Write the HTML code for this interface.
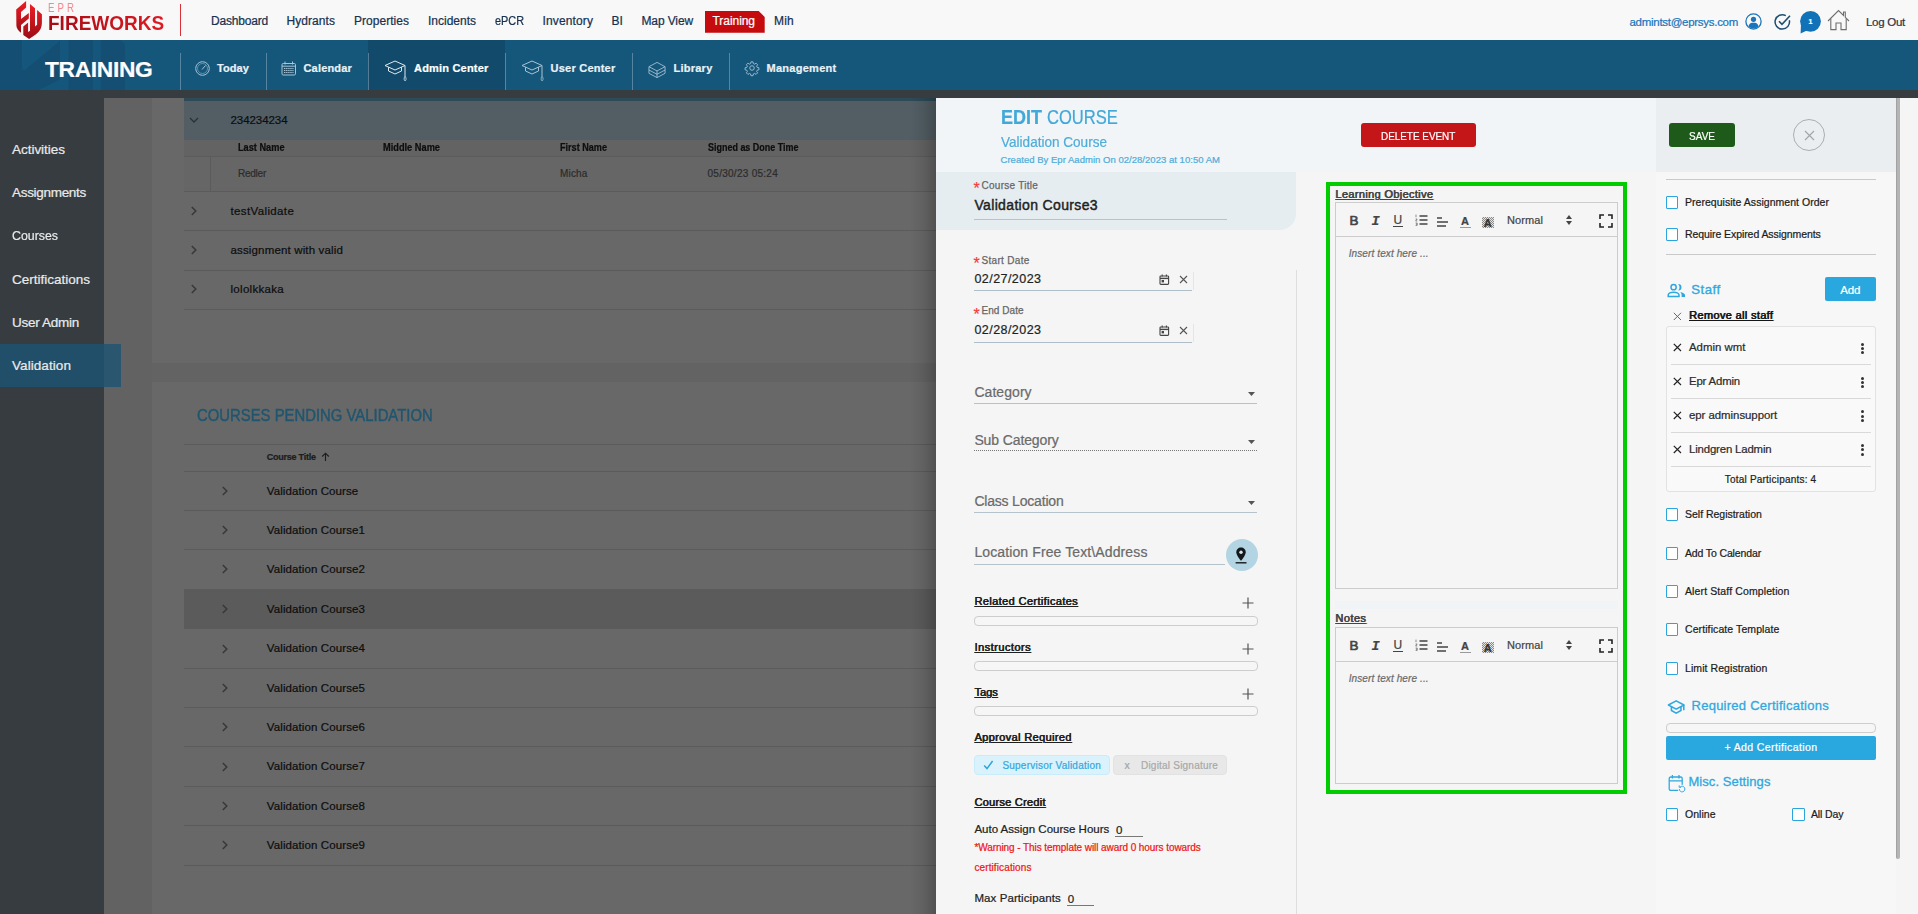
<!DOCTYPE html>
<html lang="en">
<head>
<meta charset="utf-8">
<title>EPR Fireworks - Training</title>
<style>
*{box-sizing:border-box;margin:0;padding:0}
html,body{width:1918px;height:914px;overflow:hidden;background:#636363;font-family:"Liberation Sans",sans-serif;color:#222}
.a{position:absolute}
.t{position:absolute;white-space:nowrap;line-height:1;-webkit-text-stroke-width:.22px}
svg{overflow:visible}
</style>
</head>
<body>
<div class="a" style="left:0px;top:0px;width:1918px;height:40px;background:#f8f8f8;"></div>
<div class="a" style="left:0px;top:40px;width:1918px;height:50px;background:#15567b;"></div>
<div class="a" style="left:0px;top:90px;width:1918px;height:8px;background:#373c40;"></div>
<div class="a" style="left:104px;top:98px;width:48px;height:816px;background:#626262;"></div>
<div class="a" style="left:152px;top:98px;width:790px;height:265px;background:#686868;"></div>
<div class="a" style="left:152px;top:363px;width:790px;height:19px;background:#636363;"></div>
<div class="a" style="left:152px;top:382px;width:790px;height:532px;background:#686868;"></div>
<div class="a" style="left:0px;top:90px;width:104px;height:824px;background:#373c40;"></div>
<div class="a" style="left:0px;top:344px;width:121px;height:43px;background:#2a566f;"></div>
<div class="a" style="left:0px;top:344px;width:104px;height:43px;background:#214e69;"></div>
<svg class="a" style="left:15px;top:0px;" width="28" height="40" viewBox="0 0 28 40"><defs><linearGradient id="lg" x1="0" y1="0" x2="0" y2="1"><stop offset="0" stop-color="#f01c26"/><stop offset="1" stop-color="#9a0e16"/></linearGradient></defs>
<path d="M11.1 .9 L11.1 7.6 L6 11.9 L6 19.1 L13.8 13.1 L13.8 18.4 L6 25 L6 32.8 C3.4 30.6 1.6 28.4 1.4 25.7 L1.2 9.4 Z" fill="url(#lg)"/>
<path d="M15 3.9 L20 8.3 L20 26.4 L22.1 24.8 L22.1 9.9 L26.9 14.2 L26.9 22 C26.9 25 26.4 27 25.8 28.5 C24.6 31 22.6 33 20.7 34.5 L14.1 39 L8.3 34.9 L8.3 26.4 L13.1 22.5 L13.1 31.9 L15 30.8 Z" fill="url(#lg)"/></svg>
<span class="t" style="left:48.3px;top:2.00px;font-size:12.4px;color:#f4878e;letter-spacing:3.9px;transform:scaleX(.78);transform-origin:0 0;-webkit-text-stroke-width:0;">EPR</span>
<span class="t" style="left:47.6px;top:13.00px;font-size:20.2px;font-weight:700;color:#c8141e;transform:scaleX(0.9418);transform-origin:0 0;-webkit-text-stroke:0;background:linear-gradient(to right,#a50d15,#df1a24);-webkit-background-clip:text;background-clip:text;-webkit-text-fill-color:transparent;">FIREWORKS</span>
<div class="a" style="left:180px;top:4px;width:1px;height:32px;background:#d9303a;"></div>
<span class="t" style="left:211.0px;top:15.00px;font-size:12px;color:#17314f;letter-spacing:-0.191px;">Dashboard</span>
<span class="t" style="left:286.5px;top:15.00px;font-size:12px;color:#17314f;letter-spacing:0.059px;">Hydrants</span>
<span class="t" style="left:354.0px;top:15.00px;font-size:12px;color:#17314f;letter-spacing:0.030px;">Properties</span>
<span class="t" style="left:428.0px;top:15.00px;font-size:12px;color:#17314f;">Incidents</span>
<span class="t" style="left:495.0px;top:15.00px;font-size:12px;color:#17314f;transform:scaleX(0.9058);transform-origin:0 0;">ePCR</span>
<span class="t" style="left:542.5px;top:15.00px;font-size:12px;color:#17314f;letter-spacing:0.127px;">Inventory</span>
<span class="t" style="left:611.5px;top:15.00px;font-size:12px;color:#17314f;letter-spacing:0.078px;">BI</span>
<span class="t" style="left:641.5px;top:15.00px;font-size:12px;color:#17314f;letter-spacing:-0.123px;">Map View</span>
<div class="a" style="left:704.7px;top:11px;width:60px;height:21.7px;background:#c50b0e;clip-path:polygon(0 0,54px 0,100% 6px,100% 100%,0 100%)"></div>
<span class="t" style="left:712.5px;top:15.00px;font-size:12px;color:#fff;letter-spacing:-0.053px;">Training</span>
<span class="t" style="left:774.0px;top:15.00px;font-size:12px;color:#17314f;letter-spacing:0.219px;">Mih</span>
<span class="t" style="left:1629.5px;top:17.00px;font-size:11.5px;color:#1a75bc;letter-spacing:-0.286px;">admintst@eprsys.com</span>
<svg class="a" style="left:1745px;top:13px;" width="17" height="17" viewBox="0 0 17 17"><circle cx="8.5" cy="8.5" r="7.6" fill="none" stroke="#1a75bc" stroke-width="1.3"/><circle cx="8.5" cy="6.3" r="2.6" fill="#1a75bc"/><path d="M3.4 13.2 C4.2 10.3 6.3 9.8 8.5 9.8 C10.7 9.8 12.8 10.3 13.6 13.2 C12.2 14.8 10.4 15.6 8.5 15.6 C6.6 15.6 4.8 14.8 3.4 13.2Z" fill="#1a75bc"/></svg>
<svg class="a" style="left:1774px;top:13px;" width="18" height="18" viewBox="0 0 18 18"><path d="M15.3 7.2 A7.2 7.2 0 1 1 11.8 2.6" fill="none" stroke="#1d4f72" stroke-width="1.5"/><path d="M5 8.2 L8 11.4 L16 2.8" fill="none" stroke="#1d4f72" stroke-width="1.6"/></svg>
<svg class="a" style="left:1798px;top:10px;" width="26" height="26" viewBox="0 0 26 26"><circle cx="12.5" cy="11.3" r="10.4" fill="#1272b8"/><path d="M3 14 L2.6 23.6 L10 20Z" fill="#1272b8"/></svg>
<span class="t" style="left:1808.6px;top:18.00px;font-size:7px;font-weight:700;color:#fff;">1</span>
<svg class="a" style="left:1827px;top:9px;" width="23" height="22" viewBox="0 0 23 22"><path d="M1 12 L11.5 1.5 L16.5 6.5 L16.5 3 L18.3 3 L18.3 8.3 L22 12" fill="none" stroke="#6d6e70" stroke-width="1.1"/><path d="M3.8 9.6 L3.8 20.6 L9 20.6 L9 14 L14 14 L14 20.6 L19.2 20.6 L19.2 9.6" fill="none" stroke="#6d6e70" stroke-width="1.1"/></svg>
<span class="t" style="left:1866.0px;top:17.00px;font-size:11.5px;color:#334;letter-spacing:-0.275px;">Log Out</span>
<div class="a" style="left:0px;top:40px;width:125px;height:50px;background:#144e72;border-radius:0 7px 0 0;"></div>
<svg class="a" style="left:0px;top:40px;" width="125" height="50" viewBox="0 0 125 50"><path d="M22 0H59.5V1.2L25 30H22Z M60 0H68.6V50H38.5L60 39.5Z M93 0h7.7v50H93z" fill="#15577c"/></svg>
<div class="a" style="left:368px;top:40px;width:137px;height:50px;background:#124a6c;"></div>
<div class="a" style="left:180px;top:53px;width:1px;height:37px;background:rgba(255,255,255,.28);"></div>
<div class="a" style="left:266px;top:53px;width:1px;height:37px;background:rgba(255,255,255,.28);"></div>
<div class="a" style="left:368px;top:53px;width:1px;height:37px;background:rgba(255,255,255,.28);"></div>
<div class="a" style="left:505px;top:53px;width:1px;height:37px;background:rgba(255,255,255,.28);"></div>
<div class="a" style="left:632px;top:53px;width:1px;height:37px;background:rgba(255,255,255,.28);"></div>
<div class="a" style="left:729px;top:53px;width:1px;height:37px;background:rgba(255,255,255,.28);"></div>
<span class="t" style="left:45.0px;top:58.00px;font-size:22.8px;font-weight:700;color:#fff;letter-spacing:-0.336px;">TRAINING</span>
<span class="t" style="left:217.0px;top:63.00px;font-size:11px;font-weight:700;color:#e9f1f6;letter-spacing:0.084px;">Today</span>
<span class="t" style="left:303.5px;top:63.00px;font-size:11px;font-weight:700;color:#e9f1f6;letter-spacing:0.178px;">Calendar</span>
<span class="t" style="left:414.0px;top:63.00px;font-size:11px;font-weight:700;color:#fff;letter-spacing:0.198px;">Admin Center</span>
<span class="t" style="left:550.5px;top:63.00px;font-size:11px;font-weight:700;color:#e9f1f6;letter-spacing:0.240px;">User Center</span>
<span class="t" style="left:673.5px;top:63.00px;font-size:11px;font-weight:700;color:#e9f1f6;letter-spacing:0.243px;">Library</span>
<span class="t" style="left:766.5px;top:63.00px;font-size:11px;font-weight:700;color:#e9f1f6;letter-spacing:0.275px;">Management</span>
<svg class="a" style="left:195px;top:61px;" width="15" height="15" viewBox="0 0 15 15"><circle cx="7.5" cy="7.5" r="6.8" fill="none" stroke="#a9c4d4" stroke-width="1"/><circle cx="7.5" cy="7.5" r="5" fill="none" stroke="#a9c4d4" stroke-width=".5"/><path d="M7 8.5 L10.5 4.5" stroke="#a9c4d4" stroke-width="1"/></svg>
<svg class="a" style="left:281px;top:61px;" width="16" height="15" viewBox="0 0 16 15"><rect x="1" y="2.5" width="13.5" height="11.5" rx="1.2" fill="none" stroke="#a9c4d4" stroke-width="1"/><path d="M4 .5v3M11.5 .5v3M1 5.2h13.5" stroke="#a9c4d4" stroke-width="1"/><path d="M3 7.5h9.5M3 9.5h9.5M3 11.5h9.5" stroke="#a9c4d4" stroke-width="1.2" stroke-dasharray="1.4 .7"/></svg>
<svg class="a" style="left:384px;top:59.5px;" width="24" height="22" viewBox="0 0 24 22"><path d="M1 5.5 L11 1 L21 5.5 L11 10 Z M4.5 7.2 L4.5 11 L11 14 L17.5 11 L17.5 7.2" fill="none" stroke="#dfe9ef" stroke-width="1"/><path d="M21 5.5 V17" stroke="#dfe9ef" stroke-width="1"/><rect x="20.2" y="17" width="1.8" height="3.6" rx=".9" fill="none" stroke="#dfe9ef" stroke-width=".8"/></svg>
<svg class="a" style="left:521px;top:59.5px;" width="24" height="22" viewBox="0 0 24 22"><path d="M1 5.5 L11 1 L21 5.5 L11 10 Z M4.5 7.2 L4.5 11 L11 14 L17.5 11 L17.5 7.2" fill="none" stroke="#a9c4d4" stroke-width="1"/><path d="M21 5.5 V17" stroke="#a9c4d4" stroke-width="1"/><rect x="20.2" y="17" width="1.8" height="3.6" rx=".9" fill="none" stroke="#a9c4d4" stroke-width=".8"/></svg>
<svg class="a" style="left:647.6px;top:60.6px;" width="18" height="18" viewBox="0 0 19 19"><path d="M1 6 L9.5 1.5 L18 6 L9.5 10.5Z M1 6 V13 L9.5 17.5 L18 13 V6 M9.5 10.5 V17.5 M1 9.5 L9.5 14 L18 9.5" fill="none" stroke="#a9c4d4" stroke-width=".9"/></svg>
<svg class="a" style="left:745px;top:61px;" width="14" height="14" viewBox="0 0 16 16"><circle cx="8" cy="8" r="2.6" fill="none" stroke="#a9c4d4" stroke-width="1"/><path d="M6.8 1 h2.4 l.4 2 l1.4 .6 l1.7-1.1 l1.7 1.7 l-1.1 1.7 l.6 1.4 l2 .4 v2.4 l-2 .4 l-.6 1.4 l1.1 1.7 l-1.7 1.7 l-1.7-1.1 l-1.4 .6 l-.4 2 h-2.4 l-.4-2 l-1.4-.6 l-1.7 1.1 l-1.7-1.7 l1.1-1.7 l-.6-1.4 l-2-.4 v-2.4 l2-.4 l.6-1.4 l-1.1-1.7 l1.7-1.7 l1.7 1.1 l1.4-.6 z" fill="none" stroke="#a9c4d4" stroke-width="1"/></svg>
<span class="t" style="left:12.0px;top:143.00px;font-size:13.5px;color:#e9eaea;letter-spacing:-0.027px;">Activities</span>
<span class="t" style="left:12.0px;top:186.00px;font-size:13.5px;color:#e9eaea;letter-spacing:-0.300px;">Assignments</span>
<span class="t" style="left:12.0px;top:229.00px;font-size:13.5px;color:#e9eaea;transform:scaleX(0.9149);transform-origin:0 0;">Courses</span>
<span class="t" style="left:12.0px;top:273.00px;font-size:13.5px;color:#e9eaea;">Certifications</span>
<span class="t" style="left:12.0px;top:316.00px;font-size:13.5px;color:#e9eaea;letter-spacing:-0.278px;">User Admin</span>
<span class="t" style="left:12.0px;top:359.00px;font-size:13.5px;color:#e9eaea;letter-spacing:0.070px;">Validation</span>
<div class="a" style="left:184px;top:98px;width:758px;height:3px;background:#2d4a56;"></div>
<div class="a" style="left:184px;top:101px;width:758px;height:39px;background:#525e64;"></div>
<div class="a" style="left:184px;top:140px;width:758px;height:16px;background:#636363;"></div>
<div class="a" style="left:184px;top:156px;width:758px;height:1px;background:#5b5b5b;"></div>
<div class="a" style="left:184px;top:157px;width:758px;height:34px;background:#666666;"></div>
<div class="a" style="left:210px;top:157px;width:1px;height:34px;background:#5b5b5b;"></div>
<div class="a" style="left:184px;top:191px;width:758px;height:1px;background:#5b5b5b;"></div>
<div class="a" style="left:184px;top:230px;width:758px;height:1px;background:#5b5b5b;"></div>
<div class="a" style="left:184px;top:270px;width:758px;height:1px;background:#5b5b5b;"></div>
<div class="a" style="left:184px;top:309px;width:758px;height:1px;background:#5b5b5b;"></div>
<svg class="a" style="left:189px;top:117px;" width="10" height="6" viewBox="0 0 10 6"><path d="M1 1 L5 5 L9 1" fill="none" stroke="#2a3135" stroke-width="1.3"/></svg>
<span class="t" style="left:230.5px;top:115.00px;font-size:11.5px;color:#0b0e10;letter-spacing:-0.062px;">234234234</span>
<span class="t" style="left:237.5px;top:143.00px;font-size:10px;font-weight:700;color:#0e0e0e;transform:scaleX(0.9194);transform-origin:0 0;">Last Name</span>
<span class="t" style="left:382.5px;top:143.00px;font-size:10px;font-weight:700;color:#0e0e0e;transform:scaleX(0.9240);transform-origin:0 0;">Middle Name</span>
<span class="t" style="left:560.0px;top:143.00px;font-size:10px;font-weight:700;color:#0e0e0e;transform:scaleX(0.9093);transform-origin:0 0;">First Name</span>
<span class="t" style="left:707.5px;top:143.00px;font-size:10px;font-weight:700;color:#0e0e0e;transform:scaleX(0.8965);transform-origin:0 0;">Signed as Done Time</span>
<span class="t" style="left:238.0px;top:169.00px;font-size:10px;color:#2c2c2c;letter-spacing:-0.245px;">Redler</span>
<span class="t" style="left:560.0px;top:169.00px;font-size:10px;color:#2c2c2c;letter-spacing:0.163px;">Micha</span>
<span class="t" style="left:707.5px;top:169.00px;font-size:10px;color:#2c2c2c;letter-spacing:0.269px;">05/30/23 05:24</span>
<svg class="a" style="left:191px;top:206px;" width="6" height="10" viewBox="0 0 6 10"><path d="M.8 1 L4.8 5 L.8 9" fill="none" stroke="#383838" stroke-width="1.5"/></svg>
<span class="t" style="left:230.5px;top:206.00px;font-size:11.5px;color:#0e0e0e;letter-spacing:0.371px;">testValidate</span>
<svg class="a" style="left:191px;top:245px;" width="6" height="10" viewBox="0 0 6 10"><path d="M.8 1 L4.8 5 L.8 9" fill="none" stroke="#383838" stroke-width="1.5"/></svg>
<span class="t" style="left:230.5px;top:245.00px;font-size:11.5px;color:#0e0e0e;letter-spacing:0.152px;">assignment with valid</span>
<svg class="a" style="left:191px;top:284px;" width="6" height="10" viewBox="0 0 6 10"><path d="M.8 1 L4.8 5 L.8 9" fill="none" stroke="#383838" stroke-width="1.5"/></svg>
<span class="t" style="left:230.5px;top:284.00px;font-size:11.5px;color:#0e0e0e;letter-spacing:0.300px;">lololkkaka</span>
<span class="t" style="left:197.3px;top:408.00px;font-size:16.6px;color:#20566f;transform:scaleX(0.8959);transform-origin:0 0;-webkit-text-stroke:.45px #20566f;">COURSES PENDING VALIDATION</span>
<div class="a" style="left:184px;top:444px;width:758px;height:1px;background:#5b5b5b;"></div>
<div class="a" style="left:184px;top:471px;width:758px;height:1px;background:#5b5b5b;"></div>
<span class="t" style="left:266.8px;top:453.00px;font-size:9px;font-weight:700;color:#1c1c1c;letter-spacing:-0.247px;">Course Title</span>
<svg class="a" style="left:321px;top:452px;" width="9" height="10" viewBox="0 0 9 10"><path d="M4.5 9 V1.2 M1.2 4.5 L4.5 1.2 L7.8 4.5" fill="none" stroke="#1c1c1c" stroke-width="1.1"/></svg>
<div class="a" style="left:184px;top:589px;width:758px;height:39px;background:#5b5b5b;"></div>
<div class="a" style="left:184px;top:510px;width:758px;height:1px;background:#5b5b5b;"></div>
<svg class="a" style="left:222px;top:486px;" width="6" height="10" viewBox="0 0 6 10"><path d="M.8 1 L4.8 5 L.8 9" fill="none" stroke="#383838" stroke-width="1.5"/></svg>
<span class="t" style="left:266.8px;top:486.00px;font-size:11.5px;color:#0e0e0e;letter-spacing:0.092px;">Validation Course</span>
<div class="a" style="left:184px;top:549px;width:758px;height:1px;background:#5b5b5b;"></div>
<svg class="a" style="left:222px;top:525px;" width="6" height="10" viewBox="0 0 6 10"><path d="M.8 1 L4.8 5 L.8 9" fill="none" stroke="#383838" stroke-width="1.5"/></svg>
<span class="t" style="left:266.8px;top:525.00px;font-size:11.5px;color:#0e0e0e;letter-spacing:0.104px;">Validation Course1</span>
<div class="a" style="left:184px;top:589px;width:758px;height:1px;background:#5b5b5b;"></div>
<svg class="a" style="left:222px;top:564px;" width="6" height="10" viewBox="0 0 6 10"><path d="M.8 1 L4.8 5 L.8 9" fill="none" stroke="#383838" stroke-width="1.5"/></svg>
<span class="t" style="left:266.8px;top:564.00px;font-size:11.5px;color:#0e0e0e;letter-spacing:0.104px;">Validation Course2</span>
<div class="a" style="left:184px;top:628px;width:758px;height:1px;background:#5b5b5b;"></div>
<svg class="a" style="left:222px;top:604px;" width="6" height="10" viewBox="0 0 6 10"><path d="M.8 1 L4.8 5 L.8 9" fill="none" stroke="#383838" stroke-width="1.5"/></svg>
<span class="t" style="left:266.8px;top:604.00px;font-size:11.5px;color:#0e0e0e;letter-spacing:0.104px;">Validation Course3</span>
<div class="a" style="left:184px;top:668px;width:758px;height:1px;background:#5b5b5b;"></div>
<svg class="a" style="left:222px;top:644px;" width="6" height="10" viewBox="0 0 6 10"><path d="M.8 1 L4.8 5 L.8 9" fill="none" stroke="#383838" stroke-width="1.5"/></svg>
<span class="t" style="left:266.8px;top:643.00px;font-size:11.5px;color:#0e0e0e;letter-spacing:0.104px;">Validation Course4</span>
<div class="a" style="left:184px;top:707px;width:758px;height:1px;background:#5b5b5b;"></div>
<svg class="a" style="left:222px;top:683px;" width="6" height="10" viewBox="0 0 6 10"><path d="M.8 1 L4.8 5 L.8 9" fill="none" stroke="#383838" stroke-width="1.5"/></svg>
<span class="t" style="left:266.8px;top:683.00px;font-size:11.5px;color:#0e0e0e;letter-spacing:0.104px;">Validation Course5</span>
<div class="a" style="left:184px;top:746px;width:758px;height:1px;background:#5b5b5b;"></div>
<svg class="a" style="left:222px;top:722px;" width="6" height="10" viewBox="0 0 6 10"><path d="M.8 1 L4.8 5 L.8 9" fill="none" stroke="#383838" stroke-width="1.5"/></svg>
<span class="t" style="left:266.8px;top:722.00px;font-size:11.5px;color:#0e0e0e;letter-spacing:0.104px;">Validation Course6</span>
<div class="a" style="left:184px;top:786px;width:758px;height:1px;background:#5b5b5b;"></div>
<svg class="a" style="left:222px;top:762px;" width="6" height="10" viewBox="0 0 6 10"><path d="M.8 1 L4.8 5 L.8 9" fill="none" stroke="#383838" stroke-width="1.5"/></svg>
<span class="t" style="left:266.8px;top:761.00px;font-size:11.5px;color:#0e0e0e;letter-spacing:0.104px;">Validation Course7</span>
<div class="a" style="left:184px;top:825px;width:758px;height:1px;background:#5b5b5b;"></div>
<svg class="a" style="left:222px;top:801px;" width="6" height="10" viewBox="0 0 6 10"><path d="M.8 1 L4.8 5 L.8 9" fill="none" stroke="#383838" stroke-width="1.5"/></svg>
<span class="t" style="left:266.8px;top:801.00px;font-size:11.5px;color:#0e0e0e;letter-spacing:0.104px;">Validation Course8</span>
<div class="a" style="left:184px;top:865px;width:758px;height:1px;background:#5b5b5b;"></div>
<svg class="a" style="left:222px;top:840px;" width="6" height="10" viewBox="0 0 6 10"><path d="M.8 1 L4.8 5 L.8 9" fill="none" stroke="#383838" stroke-width="1.5"/></svg>
<span class="t" style="left:266.8px;top:840.00px;font-size:11.5px;color:#0e0e0e;letter-spacing:0.104px;">Validation Course9</span>
<div class="a" style="left:910px;top:98px;width:26px;height:816px;background:linear-gradient(to right,rgba(0,0,0,0),rgba(0,0,0,.07) 50%,rgba(0,0,0,.22))"></div>
<div class="a" style="left:936px;top:98px;width:964px;height:816px;background:#f5f5f5;"></div>
<div class="a" style="left:1900px;top:98px;width:18px;height:816px;background:#f5f5f5;"></div>
<div class="a" style="left:936px;top:98px;width:720px;height:74px;background:#f2f5f8;"></div>
<div class="a" style="left:1656px;top:98px;width:240px;height:74px;background:#eaeef1;"></div>
<div class="a" style="left:1656px;top:172px;width:240px;height:742px;background:#f7f7f7;"></div>
<div class="a" style="left:936px;top:172px;width:360px;height:58px;background:#e6edf1;border-radius:0 0 16px 0;"></div>
<div class="a" style="left:1296px;top:270px;width:1px;height:644px;background:#dedede;"></div>
<div class="a" style="left:1896px;top:98px;width:4px;height:760.5px;background:#b4b4b4;border-radius:0 0 2px 2px;border-left:1px solid #a2a2a2;"></div>
<span class="t" style="left:1000.5px;top:108.00px;font-size:19.5px;font-weight:700;color:#41a8d8;transform:scaleX(0.9230);transform-origin:0 0;">EDIT</span>
<span class="t" style="left:1047.2px;top:108.00px;font-size:19.5px;color:#41a8d8;transform:scaleX(0.8485);transform-origin:0 0;">COURSE</span>
<span class="t" style="left:1000.5px;top:135.00px;font-size:14.5px;color:#4fadd9;transform:scaleX(0.9348);transform-origin:0 0;">Validation Course</span>
<span class="t" style="left:1000.5px;top:155.00px;font-size:9.5px;color:#4fadd9;letter-spacing:0.029px;">Created By Epr Aadmin On 02/28/2023 at 10:50 AM</span>
<span class="t" style="left:973.4px;top:181.00px;font-size:16px;color:#f23c3c;">*</span>
<span class="t" style="left:981.5px;top:181.00px;font-size:10px;color:#666;letter-spacing:0.262px;-webkit-text-stroke:.25px #666;">Course Title</span>
<span class="t" style="left:974.4px;top:198.00px;font-size:14px;color:#1f1f1f;letter-spacing:0.352px;-webkit-text-stroke:.45px #1f1f1f;">Validation Course3</span>
<div class="a" style="left:974px;top:219px;width:253px;height:1px;background:#b9c2c8;"></div>
<span class="t" style="left:973.4px;top:256.00px;font-size:16px;color:#f23c3c;">*</span>
<span class="t" style="left:981.5px;top:256.00px;font-size:10px;color:#666;letter-spacing:0.307px;-webkit-text-stroke:.25px #666;">Start Date</span>
<span class="t" style="left:974.4px;top:273.00px;font-size:12.5px;color:#1f1f1f;letter-spacing:0.454px;">02/27/2023</span>
<div class="a" style="left:974px;top:290px;width:218px;height:1px;background:#aebfca;"></div>
<div class="a" style="left:1193px;top:272px;width:1px;height:18px;background:#e2e6e9;"></div>
<svg class="a" style="left:1159.3px;top:273.5px;" width="11" height="11" viewBox="0 0 11 11"><rect x="1" y="2" width="8.6" height="8.4" rx=".8" fill="none" stroke="#444" stroke-width="1.1"/><path d="M1 4.4h8.6" stroke="#444" stroke-width="1.4"/><path d="M3.2 .6v2M7.4 .6v2" stroke="#444" stroke-width="1.1"/><rect x="2.6" y="6" width="2.4" height="2.4" fill="#444"/></svg>
<svg class="a" style="left:1179px;top:274.7px;" width="9" height="9" viewBox="0 0 9 9"><path d="M1 1 L8 8 M8 1 L1 8" stroke="#555" stroke-width="1.1"/></svg>
<span class="t" style="left:973.4px;top:307.00px;font-size:16px;color:#f23c3c;">*</span>
<span class="t" style="left:981.5px;top:306.00px;font-size:10px;color:#666;letter-spacing:0.050px;-webkit-text-stroke:.25px #666;">End Date</span>
<span class="t" style="left:974.4px;top:324.00px;font-size:12.5px;color:#1f1f1f;letter-spacing:0.454px;">02/28/2023</span>
<div class="a" style="left:974px;top:342px;width:218px;height:1px;background:#aebfca;"></div>
<div class="a" style="left:1193px;top:324px;width:1px;height:18px;background:#e2e6e9;"></div>
<svg class="a" style="left:1159.3px;top:324.6px;" width="11" height="11" viewBox="0 0 11 11"><rect x="1" y="2" width="8.6" height="8.4" rx=".8" fill="none" stroke="#444" stroke-width="1.1"/><path d="M1 4.4h8.6" stroke="#444" stroke-width="1.4"/><path d="M3.2 .6v2M7.4 .6v2" stroke="#444" stroke-width="1.1"/><rect x="2.6" y="6" width="2.4" height="2.4" fill="#444"/></svg>
<svg class="a" style="left:1179px;top:325.8px;" width="9" height="9" viewBox="0 0 9 9"><path d="M1 1 L8 8 M8 1 L1 8" stroke="#555" stroke-width="1.1"/></svg>
<span class="t" style="left:974.4px;top:385.00px;font-size:14px;color:#6a6a6a;letter-spacing:0.061px;">Category</span>
<div class="a" style="left:974px;top:403px;width:283px;height:1px;background:#b5c3cc;"></div>
<svg class="a" style="left:1248px;top:392.09999999999997px;" width="8" height="5" viewBox="0 0 8 5"><path d="M0 0h7L3.5 4z" fill="#555"/></svg>
<span class="t" style="left:974.4px;top:433.00px;font-size:14px;color:#6a6a6a;letter-spacing:-0.117px;">Sub Category</span>
<div class="a" style="left:974px;top:450px;width:283px;height:0;border-top:1px dotted #777"></div>
<svg class="a" style="left:1248px;top:440.2px;" width="8" height="5" viewBox="0 0 8 5"><path d="M0 0h7L3.5 4z" fill="#555"/></svg>
<span class="t" style="left:974.4px;top:494.00px;font-size:14px;color:#6a6a6a;letter-spacing:-0.195px;">Class Location</span>
<div class="a" style="left:974px;top:512px;width:283px;height:1px;background:#b5c3cc;"></div>
<svg class="a" style="left:1248px;top:501.09999999999997px;" width="8" height="5" viewBox="0 0 8 5"><path d="M0 0h7L3.5 4z" fill="#555"/></svg>
<span class="t" style="left:974.4px;top:545.00px;font-size:14px;color:#6a6a6a;letter-spacing:0.113px;">Location Free Text\Address</span>
<div class="a" style="left:974px;top:564px;width:251px;height:1px;background:#b5c3cc;"></div>
<div class="a" style="left:1226px;top:539px;width:32px;height:32px;border-radius:50%;background:#b3d4e2"></div>
<svg class="a" style="left:1235.4px;top:546.8px;" width="12" height="17" viewBox="0 0 12 17"><path d="M6 .6 C3.3 .6 1.3 2.7 1.3 5.3 C1.3 8.6 6 13.9 6 13.9 C6 13.9 10.7 8.6 10.7 5.3 C10.7 2.7 8.7 .6 6 .6Z" fill="#15181a"/><circle cx="6" cy="5.2" r="1.7" fill="#cfe6f2"/><path d="M.6 15.8h10.9" stroke="#15181a" stroke-width="1.4"/></svg>
<span class="t" style="left:974.4px;top:596.00px;font-size:11px;color:#1f1f1f;letter-spacing:0.380px;text-decoration:underline;text-shadow:.4px 0 0 #1f1f1f;text-underline-offset:1px;text-decoration-thickness:1px;">Related Certificates</span>
<svg class="a" style="left:1242px;top:596.8px;" width="12" height="12" viewBox="0 0 12 12"><path d="M6 .5v11M.5 6h11" stroke="#555" stroke-width="1.2"/></svg>
<div class="a" style="left:974px;top:616px;width:284px;height:10px;border:1px solid #cdcdcd;border-radius:4px;background:#f6f6f6"></div>
<span class="t" style="left:974.4px;top:642.00px;font-size:11px;color:#1f1f1f;letter-spacing:0.476px;text-decoration:underline;text-shadow:.4px 0 0 #1f1f1f;text-underline-offset:1px;text-decoration-thickness:1px;">Instructors</span>
<svg class="a" style="left:1242px;top:643px;" width="12" height="12" viewBox="0 0 12 12"><path d="M6 .5v11M.5 6h11" stroke="#555" stroke-width="1.2"/></svg>
<div class="a" style="left:974px;top:661px;width:284px;height:10px;border:1px solid #cdcdcd;border-radius:4px;background:#f6f6f6"></div>
<span class="t" style="left:974.4px;top:687.00px;font-size:11px;color:#1f1f1f;letter-spacing:0.013px;text-decoration:underline;text-shadow:.4px 0 0 #1f1f1f;text-underline-offset:1px;text-decoration-thickness:1px;">Tags</span>
<svg class="a" style="left:1242px;top:687.8px;" width="12" height="12" viewBox="0 0 12 12"><path d="M6 .5v11M.5 6h11" stroke="#555" stroke-width="1.2"/></svg>
<div class="a" style="left:974px;top:706px;width:284px;height:10px;border:1px solid #cdcdcd;border-radius:4px;background:#f6f6f6"></div>
<span class="t" style="left:974.4px;top:732.00px;font-size:11px;color:#1f1f1f;letter-spacing:0.363px;text-decoration:underline;text-shadow:.4px 0 0 #1f1f1f;text-underline-offset:1px;text-decoration-thickness:1px;">Approval Required</span>
<div class="a" style="left:974px;top:755px;width:136px;height:20px;border:1px solid #c9ecfb;border-radius:4px;background:#daf2fc"></div>
<svg class="a" style="left:983px;top:760px;" width="11" height="10" viewBox="0 0 11 10"><path d="M1.2 5.6 L4 8.6 L9.6 1" fill="none" stroke="#2fa3dc" stroke-width="1.5"/></svg>
<span class="t" style="left:1002.4px;top:761.00px;font-size:10px;color:#36a7dd;letter-spacing:0.230px;">Supervisor Validation</span>
<div class="a" style="left:1113px;top:755px;width:114px;height:20px;border:1px solid #e2e2e2;border-radius:4px;background:#e8e8e8"></div>
<span class="t" style="left:1124.5px;top:760.00px;font-size:10.5px;color:#a5a5a5;">x</span>
<span class="t" style="left:1141.0px;top:761.00px;font-size:10px;color:#a9a9a9;letter-spacing:0.213px;">Digital Signature</span>
<span class="t" style="left:974.4px;top:797.00px;font-size:11px;color:#1f1f1f;letter-spacing:0.257px;text-decoration:underline;text-shadow:.4px 0 0 #1f1f1f;text-underline-offset:1px;text-decoration-thickness:1px;">Course Credit</span>
<span class="t" style="left:974.4px;top:824.00px;font-size:11.5px;color:#222;">Auto Assign Course Hours</span>
<span class="t" style="left:1116.0px;top:825.00px;font-size:11.5px;color:#222;">0</span>
<div class="a" style="left:1115px;top:836px;width:28px;height:1px;background:#777;"></div>
<span class="t" style="left:974.4px;top:843.00px;font-size:10px;color:#f01414;letter-spacing:-0.074px;">*Warning - This template will award 0 hours towards</span>
<span class="t" style="left:974.4px;top:863.00px;font-size:10px;color:#f01414;letter-spacing:0.116px;">certifications</span>
<span class="t" style="left:974.4px;top:893.00px;font-size:11.5px;color:#222;letter-spacing:0.087px;">Max Participants</span>
<span class="t" style="left:1067.8px;top:894.00px;font-size:11.5px;color:#222;">0</span>
<div class="a" style="left:1067px;top:905px;width:27px;height:1px;background:#777;"></div>
<div class="a" style="left:1361px;top:123px;width:115px;height:24px;border-radius:3px;background:#c41619"></div>
<span class="t" style="left:1381.4px;top:131.00px;font-size:11px;color:#fff;transform:scaleX(0.9003);transform-origin:0 0;">DELETE EVENT</span>
<div class="a" style="left:1326px;top:182px;width:301px;height:612px;border:4px solid #0c0"></div>
<div class="a" style="left:1335px;top:601px;width:283px;height:8px;background:#f1f4f7;"></div>
<span class="t" style="left:1335.3px;top:189.00px;font-size:11px;color:#444;letter-spacing:0.343px;text-decoration:underline;text-shadow:.4px 0 0 #444;text-underline-offset:1px;text-decoration-thickness:1px;">Learning Objective</span>
<div class="a" style="left:1335px;top:202px;width:283px;height:387px;border:1px solid #ccc"></div>
<div class="a" style="left:1335px;top:236px;width:283px;height:1px;background:#ccc;"></div>
<span class="t" style="left:1349.6px;top:214.00px;font-size:13.4px;color:#444;-webkit-text-stroke:.7px #444;">B</span>
<span class="t" style="left:1371.6px;top:215.00px;font-size:13.6px;font-weight:700;font-style:italic;color:#444;font-family:'Liberation Mono',monospace;">I</span>
<span class="t" style="left:1393.5px;top:214.00px;font-size:12px;color:#444;">U</span>
<div class="a" style="left:1393px;top:226px;width:10px;height:1.2px;background:#444;"></div>
<svg class="a" style="left:1415px;top:213.5px;" width="13" height="12" viewBox="0 0 13 12"><path d="M4.5 2h8M4.5 6h8M4.5 10h8" stroke="#444" stroke-width="1.5"/><path d="M1 .6v2.6M.6 5h1.6l-1.6 2h1.6M.6 9h1.6v2.4h-1.6M.9 10.2h1.2" stroke="#444" stroke-width=".6" fill="none"/></svg>
<svg class="a" style="left:1437px;top:216.5px;" width="12" height="10" viewBox="0 0 12 10"><path d="M0 1h5M0 5h11M0 9h9" stroke="#444" stroke-width="1.5"/></svg>
<span class="t" style="left:1461.0px;top:216.00px;font-size:11px;font-weight:700;color:#444;">A</span>
<div class="a" style="left:1460px;top:227.3px;width:11px;height:0.8px;background:#999;"></div>
<div class="a" style="left:1482px;top:217px;width:12px;height:11px;background:repeating-conic-gradient(#8a8a8a 0 25%,#e4e4e4 0 50%) 0 0/2px 2px"></div>
<span class="t" style="left:1483.8px;top:218.00px;font-size:11px;font-weight:700;color:#333;">A</span>
<span class="t" style="left:1507.0px;top:215.00px;font-size:11px;color:#444;letter-spacing:0.091px;">Normal</span>
<svg class="a" style="left:1566px;top:215px;" width="6" height="10" viewBox="0 0 6 10"><path d="M3 0L6 4H0zM3 10L0 6h6z" fill="#444"/></svg>
<svg class="a" style="left:1599px;top:214px;" width="14" height="14" viewBox="0 0 14 14"><path d="M1 5V1h4M9 1h4v4M13 9v4H9M5 13H1V9" fill="none" stroke="#222" stroke-width="1.6"/></svg>
<span class="t" style="left:1348.7px;top:249.00px;font-size:10px;font-style:italic;color:#6b6b6b;letter-spacing:0.109px;">Insert text here ...</span>
<span class="t" style="left:1335.3px;top:613.00px;font-size:11px;color:#444;letter-spacing:0.450px;text-decoration:underline;text-shadow:.4px 0 0 #444;text-underline-offset:1px;text-decoration-thickness:1px;">Notes</span>
<div class="a" style="left:1335px;top:627px;width:283px;height:157px;border:1px solid #ccc"></div>
<div class="a" style="left:1335px;top:661px;width:283px;height:1px;background:#ccc;"></div>
<span class="t" style="left:1349.6px;top:639.00px;font-size:13.4px;color:#444;-webkit-text-stroke:.7px #444;">B</span>
<span class="t" style="left:1371.6px;top:640.00px;font-size:13.6px;font-weight:700;font-style:italic;color:#444;font-family:'Liberation Mono',monospace;">I</span>
<span class="t" style="left:1393.5px;top:639.00px;font-size:12px;color:#444;">U</span>
<div class="a" style="left:1393px;top:651px;width:10px;height:1.2px;background:#444;"></div>
<svg class="a" style="left:1415px;top:638.5px;" width="13" height="12" viewBox="0 0 13 12"><path d="M4.5 2h8M4.5 6h8M4.5 10h8" stroke="#444" stroke-width="1.5"/><path d="M1 .6v2.6M.6 5h1.6l-1.6 2h1.6M.6 9h1.6v2.4h-1.6M.9 10.2h1.2" stroke="#444" stroke-width=".6" fill="none"/></svg>
<svg class="a" style="left:1437px;top:641.5px;" width="12" height="10" viewBox="0 0 12 10"><path d="M0 1h5M0 5h11M0 9h9" stroke="#444" stroke-width="1.5"/></svg>
<span class="t" style="left:1461.0px;top:641.00px;font-size:11px;font-weight:700;color:#444;">A</span>
<div class="a" style="left:1460px;top:652.3px;width:11px;height:0.8px;background:#999;"></div>
<div class="a" style="left:1482px;top:642px;width:12px;height:11px;background:repeating-conic-gradient(#8a8a8a 0 25%,#e4e4e4 0 50%) 0 0/2px 2px"></div>
<span class="t" style="left:1483.8px;top:643.00px;font-size:11px;font-weight:700;color:#333;">A</span>
<span class="t" style="left:1507.0px;top:640.00px;font-size:11px;color:#444;letter-spacing:0.091px;">Normal</span>
<svg class="a" style="left:1566px;top:640px;" width="6" height="10" viewBox="0 0 6 10"><path d="M3 0L6 4H0zM3 10L0 6h6z" fill="#444"/></svg>
<svg class="a" style="left:1599px;top:639px;" width="14" height="14" viewBox="0 0 14 14"><path d="M1 5V1h4M9 1h4v4M13 9v4H9M5 13H1V9" fill="none" stroke="#222" stroke-width="1.6"/></svg>
<span class="t" style="left:1348.7px;top:674.00px;font-size:10px;font-style:italic;color:#6b6b6b;letter-spacing:0.109px;">Insert text here ...</span>
<div class="a" style="left:1669px;top:123px;width:66px;height:24px;border-radius:3px;background:#1e5b1a"></div>
<span class="t" style="left:1689.0px;top:131.00px;font-size:11px;color:#fff;transform:scaleX(0.9113);transform-origin:0 0;">SAVE</span>
<div class="a" style="left:1793px;top:119px;width:32px;height:32px;border-radius:50%;border:1px solid #a9aeb2"></div>
<svg class="a" style="left:1803.5px;top:129.5px;" width="11" height="11" viewBox="0 0 11 11"><path d="M1 1 L10 10 M10 1 L1 10" stroke="#a2a6aa" stroke-width="1.2"/></svg>
<div class="a" style="left:1666px;top:179px;width:210px;height:1px;background:#c9c9c9;"></div>
<div class="a" style="left:1666px;top:254px;width:210px;height:1px;background:#c9c9c9;"></div>
<div class="a" style="left:1666px;top:196px;width:12px;height:13px;border:1px solid #2aa5de;border-radius:1px;background:#fff"></div>
<span class="t" style="left:1685.0px;top:197.00px;font-size:10.5px;color:#1c1c1c;letter-spacing:0.035px;">Prerequisite Assignment Order</span>
<div class="a" style="left:1666px;top:228px;width:12px;height:13px;border:1px solid #2aa5de;border-radius:1px;background:#fff"></div>
<span class="t" style="left:1685.0px;top:229.00px;font-size:10.5px;color:#1c1c1c;letter-spacing:-0.076px;">Require Expired Assignments</span>
<svg class="a" style="left:1666.7px;top:283px;" width="19" height="15" viewBox="0 0 19 15"><circle cx="6.6" cy="4.2" r="2.6" fill="none" stroke="#2fa8e0" stroke-width="1.5"/><path d="M1.2 13.4v-1.3c0-1.7 2.7-2.9 5.4-2.9s5.4 1.2 5.4 2.9v1.3z" fill="none" stroke="#2fa8e0" stroke-width="1.5"/><path d="M11.2 .9a3.3 3.3 0 0 1 0 6.6a5.2 5.2 0 0 0 0-6.6z" fill="#2fa8e0"/><path d="M13.3 8.9c2.3.5 4.7 1.5 4.7 3.2v2h-3.4v-2c0-1.3-.5-2.3-1.3-3.2z" fill="#2fa8e0"/></svg>
<span class="t" style="left:1691.2px;top:283.00px;font-size:13.2px;color:#2fa8e0;letter-spacing:0.542px;-webkit-text-stroke:.35px #2fa8e0;">Staff</span>
<div class="a" style="left:1825px;top:277px;width:51px;height:24px;border-radius:2px;background:#29a8e0"></div>
<span class="t" style="left:1840.3px;top:285.00px;font-size:11.5px;color:#fff;letter-spacing:-0.156px;">Add</span>
<svg class="a" style="left:1672.5px;top:312px;" width="9" height="9" viewBox="0 0 9 9"><path d="M.8 .8 L8 8 M8 .8 L.8 8" stroke="#666" stroke-width="1"/></svg>
<span class="t" style="left:1689.0px;top:310.00px;font-size:11px;color:#151515;letter-spacing:0.346px;text-decoration:underline;text-shadow:.4px 0 0 #1f1f1f;text-underline-offset:1px;text-decoration-thickness:1px;">Remove all staff</span>
<div class="a" style="left:1666px;top:326px;width:210px;height:166px;border:1px solid #e2e2e2;border-radius:3px;background:#f9f9f9"></div>
<svg class="a" style="left:1672.8px;top:343.3px;" width="9" height="9" viewBox="0 0 9 9"><path d="M.8 .8 L8 8 M8 .8 L.8 8" stroke="#222" stroke-width="1.2"/></svg>
<span class="t" style="left:1689.0px;top:342.00px;font-size:11.4px;color:#2b2b2b;">Admin wmt</span>
<div class="a" style="left:1860.8px;top:342.6px;width:3px;height:3px;border-radius:50%;background:#333"></div>
<div class="a" style="left:1860.8px;top:346.8px;width:3px;height:3px;border-radius:50%;background:#333"></div>
<div class="a" style="left:1860.8px;top:351.0px;width:3px;height:3px;border-radius:50%;background:#333"></div>
<div class="a" style="left:1671px;top:364px;width:200px;height:1px;background:#d9d9d9;"></div>
<svg class="a" style="left:1672.8px;top:377.17px;" width="9" height="9" viewBox="0 0 9 9"><path d="M.8 .8 L8 8 M8 .8 L.8 8" stroke="#222" stroke-width="1.2"/></svg>
<span class="t" style="left:1689.0px;top:376.00px;font-size:11.4px;color:#2b2b2b;letter-spacing:-0.174px;">Epr Admin</span>
<div class="a" style="left:1860.8px;top:376.5px;width:3px;height:3px;border-radius:50%;background:#333"></div>
<div class="a" style="left:1860.8px;top:380.7px;width:3px;height:3px;border-radius:50%;background:#333"></div>
<div class="a" style="left:1860.8px;top:384.9px;width:3px;height:3px;border-radius:50%;background:#333"></div>
<div class="a" style="left:1671px;top:398px;width:200px;height:1px;background:#d9d9d9;"></div>
<svg class="a" style="left:1672.8px;top:411.04px;" width="9" height="9" viewBox="0 0 9 9"><path d="M.8 .8 L8 8 M8 .8 L.8 8" stroke="#222" stroke-width="1.2"/></svg>
<span class="t" style="left:1689.0px;top:410.00px;font-size:11.4px;color:#2b2b2b;letter-spacing:-0.029px;">epr adminsupport</span>
<div class="a" style="left:1860.8px;top:410.3px;width:3px;height:3px;border-radius:50%;background:#333"></div>
<div class="a" style="left:1860.8px;top:414.5px;width:3px;height:3px;border-radius:50%;background:#333"></div>
<div class="a" style="left:1860.8px;top:418.7px;width:3px;height:3px;border-radius:50%;background:#333"></div>
<div class="a" style="left:1671px;top:432px;width:200px;height:1px;background:#d9d9d9;"></div>
<svg class="a" style="left:1672.8px;top:444.90999999999997px;" width="9" height="9" viewBox="0 0 9 9"><path d="M.8 .8 L8 8 M8 .8 L.8 8" stroke="#222" stroke-width="1.2"/></svg>
<span class="t" style="left:1689.0px;top:444.00px;font-size:11.4px;color:#2b2b2b;letter-spacing:-0.157px;">Lindgren Ladmin</span>
<div class="a" style="left:1860.8px;top:444.2px;width:3px;height:3px;border-radius:50%;background:#333"></div>
<div class="a" style="left:1860.8px;top:448.4px;width:3px;height:3px;border-radius:50%;background:#333"></div>
<div class="a" style="left:1860.8px;top:452.6px;width:3px;height:3px;border-radius:50%;background:#333"></div>
<div class="a" style="left:1671px;top:466px;width:200px;height:1px;background:#d9d9d9;"></div>
<span class="t" style="left:1724.8px;top:475.00px;font-size:10px;color:#222;letter-spacing:0.206px;">Total Participants: 4</span>
<div class="a" style="left:1666px;top:508px;width:12px;height:13px;border:1px solid #2aa5de;border-radius:1px;background:#fff"></div>
<span class="t" style="left:1685.0px;top:509.00px;font-size:10.5px;color:#1c1c1c;letter-spacing:-0.015px;">Self Registration</span>
<div class="a" style="left:1666px;top:547px;width:12px;height:13px;border:1px solid #2aa5de;border-radius:1px;background:#fff"></div>
<span class="t" style="left:1685.0px;top:548.00px;font-size:10.5px;color:#1c1c1c;letter-spacing:-0.135px;">Add To Calendar</span>
<div class="a" style="left:1666px;top:585px;width:12px;height:13px;border:1px solid #2aa5de;border-radius:1px;background:#fff"></div>
<span class="t" style="left:1685.0px;top:586.00px;font-size:10.5px;color:#1c1c1c;letter-spacing:0.116px;">Alert Staff Completion</span>
<div class="a" style="left:1666px;top:623px;width:12px;height:13px;border:1px solid #2aa5de;border-radius:1px;background:#fff"></div>
<span class="t" style="left:1685.0px;top:624.00px;font-size:10.5px;color:#1c1c1c;letter-spacing:0.090px;">Certificate Template</span>
<div class="a" style="left:1666px;top:662px;width:12px;height:13px;border:1px solid #2aa5de;border-radius:1px;background:#fff"></div>
<span class="t" style="left:1685.0px;top:663.00px;font-size:10.5px;color:#1c1c1c;letter-spacing:0.071px;">Limit Registration</span>
<svg class="a" style="left:1667px;top:698.6px;" width="18.4" height="15.6" viewBox="0 0 20 17"><path d="M1.5 6.5 L10 2 L18.5 6.5 L10 11 Z" fill="none" stroke="#2fa8e0" stroke-width="1.7" stroke-linejoin="round"/><path d="M4.8 8.6v4L10 15.4l5.2-2.8v-4" fill="none" stroke="#2fa8e0" stroke-width="1.7"/><path d="M18.3 6.8v5.4" stroke="#2fa8e0" stroke-width="1.7"/></svg>
<span class="t" style="left:1691.5px;top:699.00px;font-size:13px;color:#2fa8e0;letter-spacing:0.260px;-webkit-text-stroke:.3px #2fa8e0;">Required Certifications</span>
<div class="a" style="left:1666px;top:723.3px;width:210px;height:10px;border:1px solid #cdcdcd;border-radius:4px;background:#f6f6f6"></div>
<div class="a" style="left:1666px;top:736px;width:210px;height:24px;border-radius:2px;background:#29a8e0"></div>
<span class="t" style="left:1724.4px;top:742.00px;font-size:10.5px;color:#fff;letter-spacing:0.394px;">+ Add Certification</span>
<svg class="a" style="left:1667.6px;top:773.7px;" width="18" height="19" viewBox="0 0 18 19"><rect x="1.2" y="3" width="13" height="13.4" rx="1.6" fill="none" stroke="#2fa8e0" stroke-width="1.3"/><path d="M1.2 6.8h13M4.4 1v3.4M11 1v3.4" stroke="#2fa8e0" stroke-width="1.3"/><circle cx="14" cy="15" r="4.2" fill="#f7f7f7"/><path d="M11.3 15a2.8 2.8 0 1 0 .9-2M11.2 11.4v1.9h1.9" fill="none" stroke="#2fa8e0" stroke-width="1"/></svg>
<span class="t" style="left:1688.4px;top:775.00px;font-size:13px;color:#2fa8e0;letter-spacing:0.084px;-webkit-text-stroke:.3px #2fa8e0;">Misc. Settings</span>
<div class="a" style="left:1666px;top:808px;width:12px;height:13px;border:1px solid #2aa5de;border-radius:1px;background:#fff"></div>
<span class="t" style="left:1685.0px;top:809.00px;font-size:10.5px;color:#1c1c1c;letter-spacing:0.023px;">Online</span>
<div class="a" style="left:1792px;top:808px;width:13px;height:13px;border:1px solid #2aa5de;border-radius:1px;background:#fff"></div>
<span class="t" style="left:1811.0px;top:809.00px;font-size:10.5px;color:#1c1c1c;letter-spacing:-0.138px;">All Day</span>
</body>
</html>
